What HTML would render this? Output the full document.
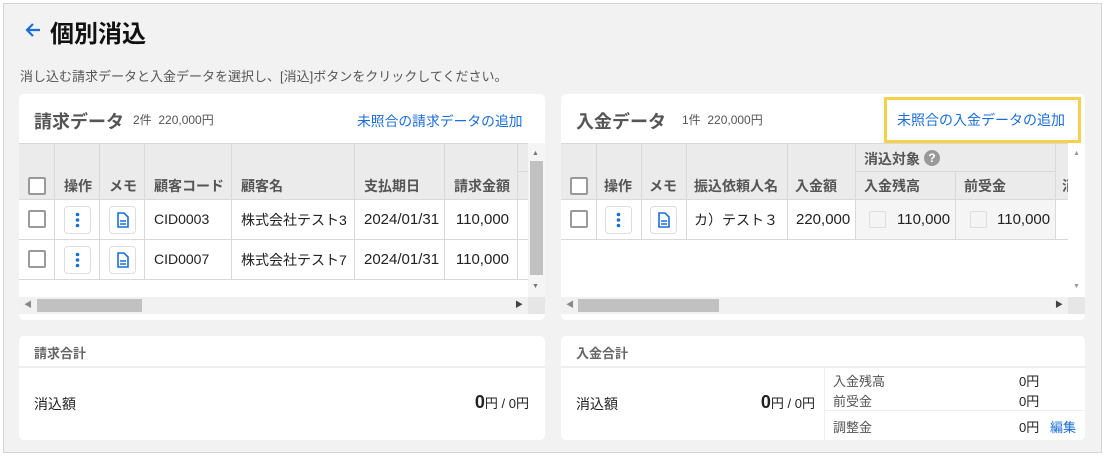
<!DOCTYPE html>
<html><head><meta charset="utf-8"><style>
*{box-sizing:border-box;margin:0;padding:0}
body{width:1105px;height:456px;background:#fff;font-family:"Liberation Sans","Noto Sans CJK JP",sans-serif;position:relative;overflow:hidden;color:#222}
.frame{position:absolute;left:3px;top:3px;width:1099px;height:450px;background:#f2f2f2;border:1px solid #d4d4d4}
.a{position:absolute;white-space:nowrap}
.card{position:absolute;background:#fff;border-radius:5px;overflow:hidden}
.cb{position:absolute;width:18px;height:18px;border:2px solid #9a9a9a;border-radius:2px;background:#fff}
.cbd{position:absolute;width:17px;height:17px;border:1px solid #ddd;border-radius:2px;background:#f4f4f4}
.th{position:absolute;background:#ebebeb}
.h{position:absolute;white-space:nowrap;font-size:14px;font-weight:bold;color:#555}
.vl{position:absolute;width:1px;background:#d9d9d9}
.hl{position:absolute;height:1px;background:#d9d9d9}
.btn{position:absolute;width:27px;height:28px;border:1px solid #ddd;border-radius:4px;background:#fff}
.td{font-size:14px;color:#222}
.blue{color:#1a6ed8}
</style></head><body>
<div class="frame"></div>
<svg class="a" style="left:24px;top:21px" width="18" height="18" viewBox="0 0 18 18"><path d="M16 9H3M9 3L3 9l6 6" fill="none" stroke="#1a6ed8" stroke-width="2.2"/></svg>
<div class="a" style="left:50px;top:14px;font-size:24px;font-weight:bold;color:#111">個別消込</div>
<div class="a" style="left:20px;top:66px;font-size:13px;color:#555">消し込む請求データと入金データを選択し、[消込]ボタンをクリックしてください。</div>

<!-- left card -->
<div class="card" style="left:19px;top:94px;width:526px;height:226px">
 <div class="a" style="left:15px;top:14px;font-size:18px;font-weight:bold;color:#555">請求データ</div>
 <div class="a" style="left:114px;top:17px;font-size:12px;color:#555">2件&nbsp; 220,000円</div>
 <div class="a blue" style="left:338px;top:16px;font-size:13.8px">未照合の請求データの追加</div>
 <div class="th" style="left:0;top:49px;width:509px;height:56px"></div>
 <div class="hl" style="left:0;top:49px;width:509px"></div>
 <div class="hl" style="left:0;top:105px;width:509px"></div>
 <div class="hl" style="left:0;top:145px;width:509px"></div>
 <div class="hl" style="left:0;top:185px;width:509px"></div>
 <div class="hl" style="left:498px;top:77px;width:11px"></div>
 <div class="vl" style="left:35px;top:49px;height:136px"></div>
 <div class="vl" style="left:80px;top:49px;height:136px"></div>
 <div class="vl" style="left:125px;top:49px;height:136px"></div>
 <div class="vl" style="left:212px;top:49px;height:136px"></div>
 <div class="vl" style="left:335px;top:49px;height:136px"></div>
 <div class="vl" style="left:425px;top:49px;height:136px"></div>
 <div class="vl" style="left:498px;top:49px;height:136px"></div>
 <div class="cb" style="left:9px;top:83px"></div>
 <div class="h" style="left:45px;top:82px">操作</div>
 <div class="h" style="left:90px;top:82px">メモ</div>
 <div class="h" style="left:135px;top:82px">顧客コード</div>
 <div class="h" style="left:222px;top:82px">顧客名</div>
 <div class="h" style="left:345px;top:82px">支払期日</div>
 <div class="h" style="left:435px;top:82px">請求金額</div>
 <!-- rows -->
 <div class="cb" style="left:9px;top:116px"></div>
 <div class="btn" style="left:45px;top:112px"></div>
 <svg class="a" style="left:45px;top:112px" width="27" height="28"><circle cx="13.5" cy="8.5" r="1.8" fill="#1a6ed8"/><circle cx="13.5" cy="14" r="1.8" fill="#1a6ed8"/><circle cx="13.5" cy="19.5" r="1.8" fill="#1a6ed8"/></svg>
 <div class="btn" style="left:90px;top:112px"></div>
 <svg class="a" style="left:90px;top:112px" width="27" height="28"><path d="M9 7h6l4 4v10H9z" fill="none" stroke="#1a6ed8" stroke-width="1.6"/><path d="M11 15h6M11 18h6" stroke="#1a6ed8" stroke-width="1.4"/></svg>
 <div class="a td" style="left:135px;top:117px">CID0003</div>
 <div class="a td" style="left:222px;top:116px">株式会社テスト3</div>
 <div class="a td" style="left:345px;top:117px;font-size:15px">2024/01/31</div>
 <div class="a td" style="right:36px;top:117px;font-size:15px">110,000</div>
 <div class="cb" style="left:9px;top:156px"></div>
 <div class="btn" style="left:45px;top:152px"></div>
 <svg class="a" style="left:45px;top:152px" width="27" height="28"><circle cx="13.5" cy="8.5" r="1.8" fill="#1a6ed8"/><circle cx="13.5" cy="14" r="1.8" fill="#1a6ed8"/><circle cx="13.5" cy="19.5" r="1.8" fill="#1a6ed8"/></svg>
 <div class="btn" style="left:90px;top:152px"></div>
 <svg class="a" style="left:90px;top:152px" width="27" height="28"><path d="M9 7h6l4 4v10H9z" fill="none" stroke="#1a6ed8" stroke-width="1.6"/><path d="M11 15h6M11 18h6" stroke="#1a6ed8" stroke-width="1.4"/></svg>
 <div class="a td" style="left:135px;top:157px">CID0007</div>
 <div class="a td" style="left:222px;top:156px">株式会社テスト7</div>
 <div class="a td" style="left:345px;top:157px;font-size:15px">2024/01/31</div>
 <div class="a td" style="right:36px;top:157px;font-size:15px">110,000</div>
 <!-- scrollbars -->
 <div class="a" style="left:509px;top:49px;width:17px;height:154px;background:#f5f5f5"></div>
 <div class="a" style="left:511px;top:67px;width:13px;height:114px;background:#c1c1c1"></div>
 <div class="a" style="left:513px;top:56px;font-size:7px;color:#777">▲</div>
 <div class="a" style="left:513px;top:189px;font-size:7px;color:#777">▼</div>
 <div class="a" style="left:0;top:203px;width:509px;height:17px;background:#f1f1f1"></div>
 <div class="a" style="left:18px;top:205px;width:105px;height:13px;background:#c1c1c1"></div>
 <div class="a" style="left:5px;top:205px;font-size:8px;color:#888">◀</div>
 <div class="a" style="left:496px;top:205px;font-size:8px;color:#444">▶</div>
 <div class="a" style="left:509px;top:203px;width:17px;height:17px;background:#e6e6e6"></div>
</div>

<!-- right card -->
<div class="card" style="left:561px;top:94px;width:524px;height:226px">
 <div class="a" style="left:15px;top:14px;font-size:18px;font-weight:bold;color:#555">入金データ</div>
 <div class="a" style="left:121px;top:17px;font-size:12px;color:#555">1件&nbsp; 220,000円</div>
 <div class="th" style="left:0;top:49px;width:507px;height:56px"></div>
 <div class="hl" style="left:0;top:49px;width:507px"></div>
 <div class="hl" style="left:0;top:105px;width:507px"></div>
 <div class="hl" style="left:0;top:145px;width:507px"></div>
 <div class="hl" style="left:294px;top:77px;width:200px"></div>
 <div class="a" style="left:294px;top:106px;width:200px;height:39px;background:#f5f5f5"></div>
 <div class="vl" style="left:35px;top:49px;height:96px"></div>
 <div class="vl" style="left:80px;top:49px;height:96px"></div>
 <div class="vl" style="left:125px;top:49px;height:96px"></div>
 <div class="vl" style="left:226px;top:49px;height:96px"></div>
 <div class="vl" style="left:294px;top:49px;height:96px"></div>
 <div class="vl" style="left:394px;top:77px;height:68px"></div>
 <div class="vl" style="left:494px;top:49px;height:96px"></div>
 <div class="cb" style="left:9px;top:83px"></div>
 <div class="h" style="left:43px;top:82px">操作</div>
 <div class="h" style="left:88px;top:82px">メモ</div>
 <div class="h" style="left:133px;top:82px">振込依頼人名</div>
 <div class="h" style="left:234px;top:82px">入金額</div>
 <div class="h" style="left:303px;top:55px">消込対象</div>
 <div class="a" style="left:363px;top:56px;width:16px;height:16px;border-radius:50%;background:#999;color:#fff;font-size:12px;font-weight:bold;text-align:center;line-height:16px">?</div>
 <div class="h" style="left:303px;top:82px">入金残高</div>
 <div class="h" style="left:403px;top:82px">前受金</div>
 <div class="h" style="left:501px;top:82px">消</div>
 <div class="cb" style="left:9px;top:116px"></div>
 <div class="btn" style="left:44px;top:112px"></div>
 <svg class="a" style="left:44px;top:112px" width="27" height="28"><circle cx="13.5" cy="8.5" r="1.8" fill="#1a6ed8"/><circle cx="13.5" cy="14" r="1.8" fill="#1a6ed8"/><circle cx="13.5" cy="19.5" r="1.8" fill="#1a6ed8"/></svg>
 <div class="btn" style="left:89px;top:112px"></div>
 <svg class="a" style="left:89px;top:112px" width="27" height="28"><path d="M9 7h6l4 4v10H9z" fill="none" stroke="#1a6ed8" stroke-width="1.6"/><path d="M11 15h6M11 18h6" stroke="#1a6ed8" stroke-width="1.4"/></svg>
 <div class="a td" style="left:133px;top:116px">カ）テスト３</div>
 <div class="a td" style="left:235px;top:117px;font-size:15px">220,000</div>
 <div class="cbd" style="left:308px;top:117px"></div>
 <div class="a td" style="left:336px;top:117px;font-size:15px">110,000</div>
 <div class="cbd" style="left:409px;top:117px"></div>
 <div class="a td" style="left:436px;top:117px;font-size:15px">110,000</div>
 <div class="a" style="left:507px;top:49px;width:17px;height:154px;background:#fff"></div>
 <div class="a" style="left:512px;top:56px;font-size:7px;color:#999">▲</div>
 <div class="a" style="left:512px;top:189px;font-size:7px;color:#999">▼</div>
 <div class="a" style="left:0;top:203px;width:507px;height:17px;background:#f1f1f1"></div>
 <div class="a" style="left:17px;top:205px;width:141px;height:13px;background:#c1c1c1"></div>
 <div class="a" style="left:5px;top:205px;font-size:8px;color:#888">◀</div>
 <div class="a" style="left:494px;top:205px;font-size:8px;color:#444">▶</div>
 <div class="a" style="left:507px;top:203px;width:17px;height:17px;background:#e6e6e6"></div>
</div>
<div class="a" style="left:884px;top:97px;width:197px;height:46px;border:3px solid #f5d04f;background:#fff"></div>
<div class="a blue" style="left:897px;top:110px;font-size:14px">未照合の入金データの追加</div>

<!-- bottom left -->
<div class="card" style="left:19px;top:336px;width:526px;height:104px">
 <div class="a" style="left:15px;top:7px;font-size:13px;font-weight:bold;color:#666">請求合計</div>
 <div class="hl" style="left:0;top:30px;width:526px;height:2px;background:#eee"></div>
 <div class="a" style="left:15px;top:58px;font-size:14px">消込額</div>
 <div class="a" style="right:16px;top:56px;font-size:13px"><b style="font-size:18px">0</b>円 / 0円</div>
</div>
<!-- bottom right -->
<div class="card" style="left:561px;top:336px;width:524px;height:104px">
 <div class="a" style="left:15px;top:7px;font-size:13px;font-weight:bold;color:#666">入金合計</div>
 <div class="hl" style="left:0;top:30px;width:524px;height:2px;background:#eee"></div>
 <div class="a" style="left:15px;top:58px;font-size:14px">消込額</div>
 <div class="a" style="right:270px;top:56px;font-size:13px"><b style="font-size:18px">0</b>円 / 0円</div>
 <div class="vl" style="left:263px;top:32px;height:72px;background:#eee"></div>
 <div class="hl" style="left:263px;top:74px;width:261px;background:#eee"></div>
 <div class="a" style="left:272px;top:35px;font-size:13px;color:#555">入金残高</div>
 <div class="a" style="left:272px;top:55px;font-size:13px;color:#555">前受金</div>
 <div class="a" style="left:272px;top:81px;font-size:13px;color:#555">調整金</div>
 <div class="a" style="left:458px;top:35px;font-size:13px">0円</div>
 <div class="a" style="left:458px;top:55px;font-size:13px">0円</div>
 <div class="a" style="left:458px;top:81px;font-size:13px">0円</div>
 <div class="a blue" style="left:489px;top:81px;font-size:13px">編集</div>
</div>
</body></html>
